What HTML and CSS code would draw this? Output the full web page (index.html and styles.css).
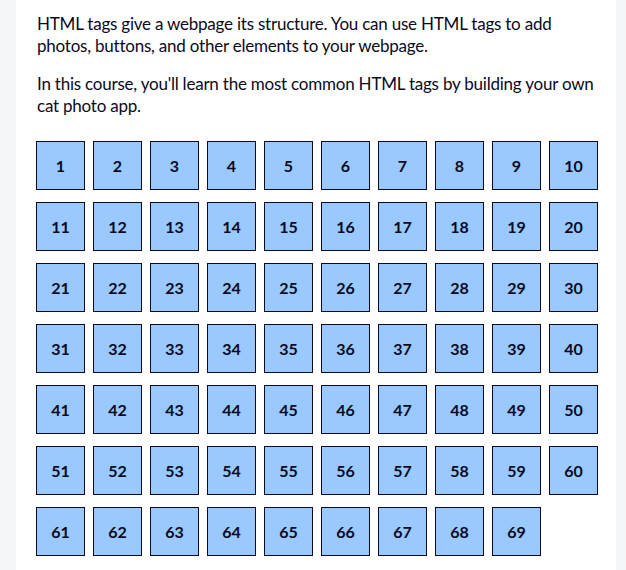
FILE: index.html
```html
<!DOCTYPE html>
<html lang="en">
<head>
<meta charset="utf-8">
<title>Cat Photo App</title>
<link rel="stylesheet" href="styles.css">
</head>
<body>
<main class="panel">
  <p class="intro">HTML tags give a webpage its structure. You can use HTML tags to add photos, buttons, and other elements to your webpage.</p>
  <p class="intro">In this course, you'll learn the most common HTML tags by building your own cat photo app.</p>
  <div class="grid">
    <div class="cell">1</div><div class="cell">2</div><div class="cell">3</div><div class="cell">4</div><div class="cell">5</div><div class="cell">6</div><div class="cell">7</div><div class="cell">8</div><div class="cell">9</div><div class="cell">10</div>
    <div class="cell">11</div><div class="cell">12</div><div class="cell">13</div><div class="cell">14</div><div class="cell">15</div><div class="cell">16</div><div class="cell">17</div><div class="cell">18</div><div class="cell">19</div><div class="cell">20</div>
    <div class="cell">21</div><div class="cell">22</div><div class="cell">23</div><div class="cell">24</div><div class="cell">25</div><div class="cell">26</div><div class="cell">27</div><div class="cell">28</div><div class="cell">29</div><div class="cell">30</div>
    <div class="cell">31</div><div class="cell">32</div><div class="cell">33</div><div class="cell">34</div><div class="cell">35</div><div class="cell">36</div><div class="cell">37</div><div class="cell">38</div><div class="cell">39</div><div class="cell">40</div>
    <div class="cell">41</div><div class="cell">42</div><div class="cell">43</div><div class="cell">44</div><div class="cell">45</div><div class="cell">46</div><div class="cell">47</div><div class="cell">48</div><div class="cell">49</div><div class="cell">50</div>
    <div class="cell">51</div><div class="cell">52</div><div class="cell">53</div><div class="cell">54</div><div class="cell">55</div><div class="cell">56</div><div class="cell">57</div><div class="cell">58</div><div class="cell">59</div><div class="cell">60</div>
    <div class="cell">61</div><div class="cell">62</div><div class="cell">63</div><div class="cell">64</div><div class="cell">65</div><div class="cell">66</div><div class="cell">67</div><div class="cell">68</div><div class="cell">69</div>
  </div>
</main>
</body>
</html>
```
FILE: styles.css
```css
html, body {
  margin: 0;
  padding: 0;
  background: #f5f6f7;
}

body {
  font-family: Lato, "Open Sans", sans-serif;
  color: #0a0a23;
  height: 570px;
  overflow: hidden;
}

.panel {
  margin-left: 16px;
  width: 600px;
  min-height: 570px;
  box-sizing: border-box;
  background: #ffffff;
  padding: 13px 16px 0 21px;
}

.intro {
  font-size: 17px;
  letter-spacing: -0.22px;
  line-height: 21.6px;
  margin: 0 0 17px 0;
}

.grid {
  display: flex;
  flex-wrap: wrap;
  column-gap: 8px;
  row-gap: 12px;
  margin-top: 25px;
  margin-left: -1px;
  width: 564px;
}

.cell {
  width: 49px;
  height: 49px;
  box-sizing: border-box;
  border: 1.5px solid #0a0a23;
  background: #99c9ff;
  display: flex;
  align-items: center;
  justify-content: center;
  font-weight: 700;
  font-size: 16px;
  color: #0a0a23;
}
```
